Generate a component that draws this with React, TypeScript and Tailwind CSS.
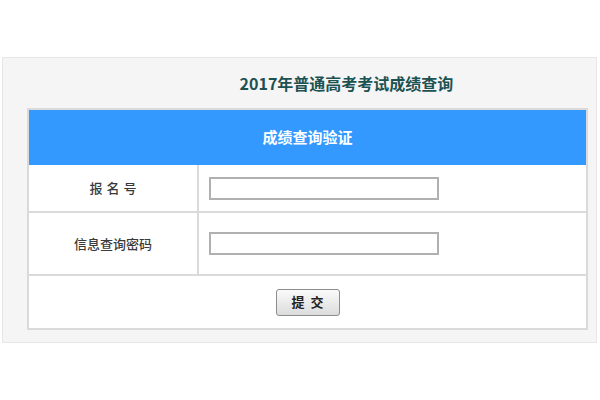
export default function App() {
  const font = { fontFamily: '"Noto Sans CJK SC", "Liberation Sans", sans-serif' };
  return (
    <div className="w-[600px] h-[400px] bg-white pt-[57px]" style={font}>
      <div className="ml-[2px] mr-[3px] h-[286px] bg-[#f5f5f5] border border-[#e6e6e6] flex flex-col">
        <div className="h-[50px] flex items-center justify-center pl-[94px] text-[16px] font-bold text-[#1d5252]">
          2017年普通高考考试成绩查询
        </div>
        <div className="ml-[24px] mr-[8px] border-2 border-[#dadada] bg-white flex flex-col">
          <div className="h-[55px] bg-[#3399ff] flex items-center justify-center text-white text-[15px] font-bold">
            成绩查询验证
          </div>
          <div className="flex h-[48px] border-b-2 border-[#dadada]">
            <div className="w-[170px] border-r-2 border-[#dadada] flex items-center justify-center text-[13px] font-medium text-[#3a3a3a] tracking-[4px] pl-[4px]">
              报名号
            </div>
            <div className="flex-1 flex items-center pl-[10px]">
              <input className="w-[230px] h-[23px] border-2 border-[#b0b0b0] bg-white outline-none" />
            </div>
          </div>
          <div className="flex h-[63px] border-b-2 border-[#dadada]">
            <div className="w-[170px] border-r-2 border-[#dadada] flex items-center justify-center text-[13px] font-medium text-[#3a3a3a]">
              信息查询密码
            </div>
            <div className="flex-1 flex items-center pl-[10px]">
              <input className="w-[230px] h-[23px] border-2 border-[#b0b0b0] bg-white outline-none" />
            </div>
          </div>
          <div className="h-[52px] flex items-center justify-center">
            <button className="w-[64px] h-[27px] rounded-[3px] border border-[#8c8c8c] bg-gradient-to-b from-[#fafafa] to-[#dcdcdc] text-[13px] text-[#222] font-bold" style={font}>
              提&nbsp;&nbsp;交
            </button>
          </div>
        </div>
      </div>
    </div>
  );
}
